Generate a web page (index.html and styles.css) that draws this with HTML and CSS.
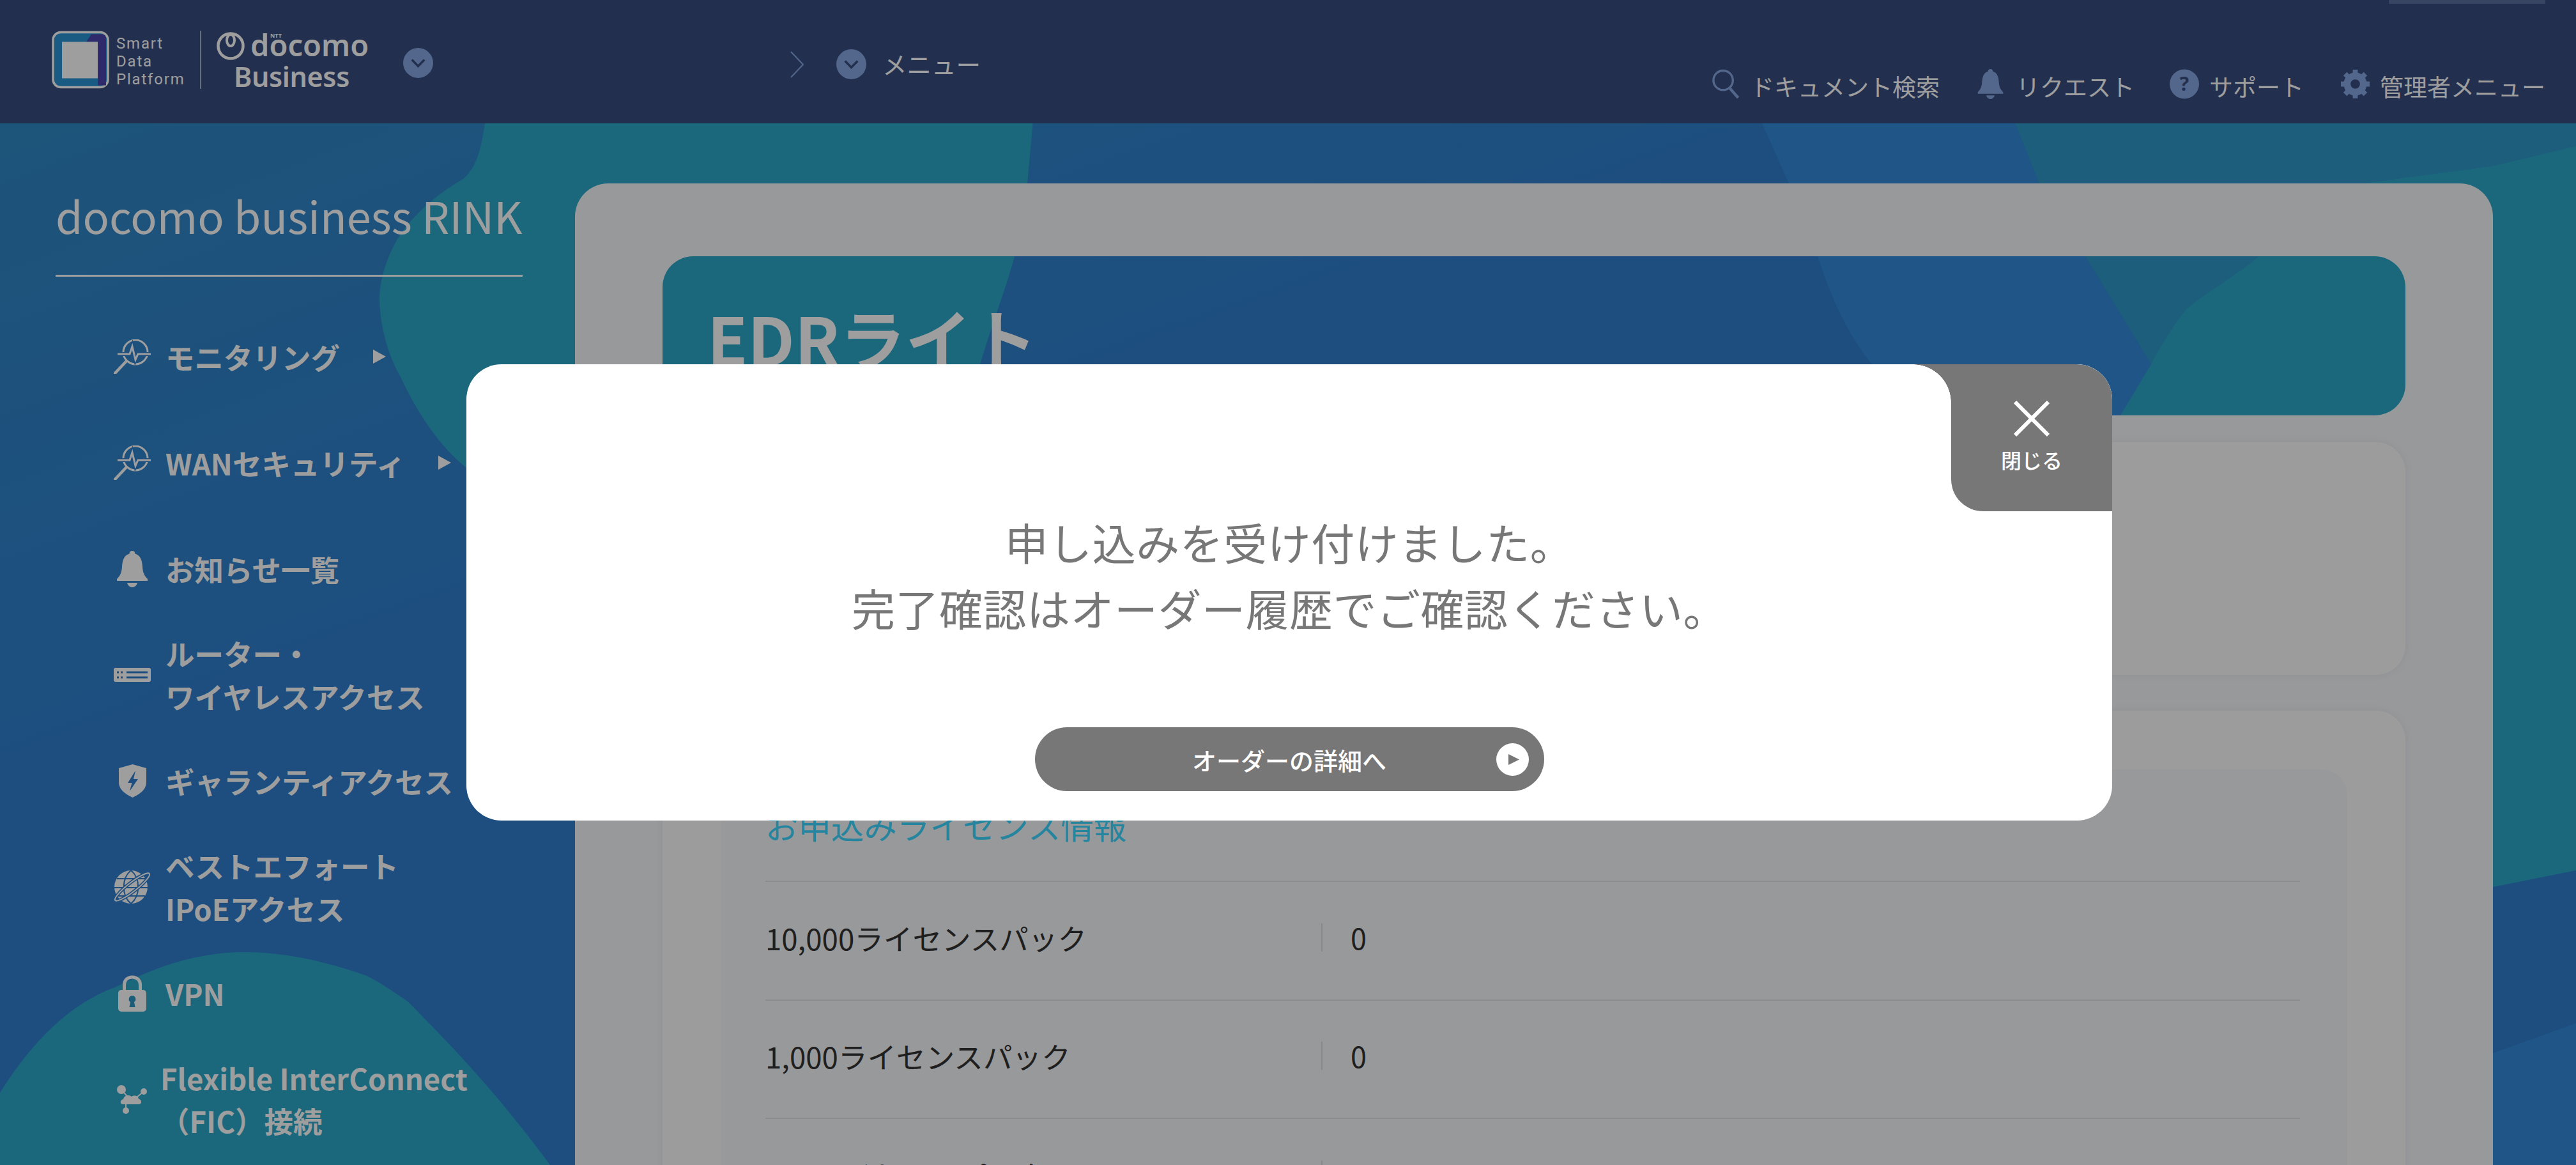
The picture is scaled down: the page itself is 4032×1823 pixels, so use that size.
FILE: index.html
```html
<!DOCTYPE html>
<html lang="ja">
<head>
<meta charset="utf-8">
<title>EDRライト</title>
<link rel="stylesheet" href="styles.css">
</head>
<body>
<header class="topbar">
  <div class="brand">
    <svg class="brand-mark" viewBox="0 0 90 90"><rect x="2" y="2" width="86" height="86" rx="12" class="bm-bg"/><path class="bm-purple" d="M62 5H78Q85 5 85 12V85H72V17H54Z"/><rect x="16" y="17" width="56" height="57" class="bm-in"/></svg>
    <div class="brand-name"><span>Smart</span><span>Data</span><span>Platform</span></div>
    <div class="brand-divider"></div>
    <div class="docomo">
      <div class="docomo-row">
        <svg class="docomo-ring" viewBox="0 0 48 44"><circle cx="24" cy="22" r="19.5" class="ring"/><ellipse cx="24" cy="13" rx="6" ry="9" class="ring-in"/></svg>
        <span class="docomo-word">docomo<small class="ntt">NTT</small></span>
      </div>
      <div class="docomo-biz">Business</div>
    </div>
  </div>
  <span class="round-toggle brand-toggle"><svg viewBox="0 0 24 24"><path d="M7 9.5l5 5 5-5"/></svg></span>
  <nav class="crumb">
    <svg class="crumb-arrow" viewBox="0 0 21 42"><path d="M1 1l19 20L1 41"/></svg>
    <span class="round-toggle"><svg viewBox="0 0 24 24"><path d="M7 9.5l5 5 5-5"/></svg></span>
    <span class="crumb-label">メニュー</span>
  </nav>
  <div class="utility">
    <div class="utility-tab"></div>
    <ul class="utility-nav">
      <li class="util-search"><svg viewBox="0 0 46 48"><circle cx="18" cy="18" r="15.5" class="u-stroke"/><path d="M28 30l14 16" class="u-stroke u-thick"/></svg>ドキュメント検索</li>
      <li class="util-bell"><svg viewBox="0 0 48 57"><use href="#bell"/></svg>リクエスト</li>
      <li class="util-help"><svg viewBox="0 0 46 47"><circle cx="23" cy="23.5" r="23"/><text x="23" y="34" class="q">?</text></svg>サポート</li>
      <li class="util-gear"><svg viewBox="0 0 48 48"><g class="gear"><circle cx="24" cy="24" r="13" class="gear-ring"/><path d="M20 1h8v8h-8zM20 39h8v8h-8zM1 20h8v8H1zM39 20h8v8h-8z"/><path d="M20 1h8v8h-8zM20 39h8v8h-8zM1 20h8v8H1zM39 20h8v8h-8z" transform="rotate(45 24 24)"/></g></svg>管理者メニュー</li>
    </ul>
  </div>
</header>

<svg class="defs"><defs>
  <g id="bell"><path d="M24 0c-3 0-4.500 2-4.500 4.500C11 7 8.500 15 8 25c-.5 9-3 14-8 19v3h48v-3c-5-5-7.500-10-8-19-.5-10-3-18-11.500-20.500C28.500 2 27 0 24 0z"/><path d="M16 50h16c-1 4-4 7-8 7s-7-3-8-7z"/></g>
  <g id="scope"><circle cx="34" cy="20" r="19" class="i-line"/><path d="M19 35L2 53" class="i-line i-thick"/><path d="M6 23H25L29 11L34 32L38 23H58" class="i-halo"/><path d="M6 23H25L29 11L34 32L38 23H58" class="i-line"/></g>
</defs></svg>

<div class="layout">
  <aside class="sidebar">
    <h2 class="side-title">docomo business RINK</h2>
    <ul class="side-menu">
      <li class="side-item"><span class="side-icon"><svg class="ic-scope" viewBox="0 0 58 54"><use href="#scope"/></svg></span><span class="side-text">モニタリング</span><i class="caret"></i></li>
      <li class="side-item"><span class="side-icon"><svg class="ic-scope" viewBox="0 0 58 54"><use href="#scope"/></svg></span><span class="side-text">WANセキュリティ</span><i class="caret"></i></li>
      <li class="side-item"><span class="side-icon"><svg class="ic-bell" viewBox="0 0 48 57"><use href="#bell"/></svg></span><span class="side-text">お知らせ一覧</span></li>
      <li class="side-item"><span class="side-icon"><svg class="ic-router" viewBox="0 0 58 22"><rect width="58" height="22" rx="3"/><path d="M5 7h3M11 7h3M5 15h3M11 15h3M20 7h33M20 15h33" class="cut"/></svg></span><span class="side-text">ルーター・<br>ワイヤレスアクセス</span></li>
      <li class="side-item"><span class="side-icon"><svg class="ic-shield" viewBox="0 0 43 52"><path d="M21.500 0L43 6V28C43 40 32 47 21.500 52 11 47 0 40 0 28V6z"/><path class="bolt" d="M26 10L14 29H20.500L17 42 30 23H23z"/></svg></span><span class="side-text">ギャランティアクセス</span></li>
      <li class="side-item"><span class="side-icon"><svg class="ic-globe" viewBox="0 0 58 54"><circle cx="27" cy="27" r="26"/><path class="cut-thin" d="M5 14H49M1 28H53M5 41H49M27 1C12 13 12 41 27 53M27 1C42 13 42 41 27 53"/><ellipse cx="29" cy="27" rx="34" ry="7" transform="rotate(-38 29 27)" class="orbit-cut"/><ellipse cx="29" cy="27" rx="34" ry="7" transform="rotate(-38 29 27)" class="orbit"/></svg></span><span class="side-text">ベストエフォート<br>IPoEアクセス</span></li>
      <li class="side-item"><span class="side-icon"><svg class="ic-lock" viewBox="0 0 44 57"><path class="shackle" d="M9.500 26V15C9.500 7.500 15 3 22 3s12.500 4.500 12.500 12V26"/><rect y="23" width="44" height="34" rx="5"/><path class="keyhole" d="M22 32a5.500 5.500 0 0 1 3 10l1.500 8h-9l1.500-8a5.500 5.500 0 0 1 3-10z"/></svg></span><span class="side-text">VPN</span></li>
      <li class="side-item side-item-wide"><span class="side-icon"><svg class="ic-fic" viewBox="0 0 50 46"><circle cx="8" cy="8" r="7"/><circle cx="43" cy="11" r="5"/><circle cx="15" cy="41" r="5"/><path class="fic-line" d="M8 8L20 22M43 11L32 20M15 41V28"/><path d="M10 31c-4 0-5-7 1-8 1-6 9-8 13-4 4-3 11-1 11 4 5 0 6 8 0 8z"/></svg></span><span class="side-text">Flexible InterConnect<br>（FIC）接続</span></li>
    </ul>
  </aside>

  <main class="panel">
    <section class="hero"><h1 class="hero-title">EDRライト</h1></section>
    <section class="card card-summary"></section>
    <section class="card card-detail">
      <div class="inner">
        <h3 class="inner-title">お申込みライセンス情報</h3>
        <dl class="rows">
          <div class="row"><dt>10,000ライセンスパック</dt><dd>0</dd></div>
          <div class="row"><dt>1,000ライセンスパック</dt><dd>0</dd></div>
          <div class="row"><dt>100ライセンスパック</dt><dd>1</dd></div>
        </dl>
      </div>
    </section>
  </main>
</div>

<div class="overlay">
  <div class="modal">
    <div class="close">
      <svg class="close-x" viewBox="0 0 56 56"><path d="M2 2L54 54M54 2L2 54"/></svg>
      <span>閉じる</span>
    </div>
    <p class="modal-text">申し込みを受け付けました。<br>完了確認はオーダー履歴でご確認ください。</p>
    <a class="modal-btn">オーダーの詳細へ<svg class="play" viewBox="0 0 51 51"><circle cx="25.500" cy="25.500" r="25.500"/><path d="M19 17V34L36 25.500z"/></svg></a>
  </div>
</div>
</body>
</html>
```

FILE: styles.css
```css
:root {
  --scene: url("data:image/svg+xml,%3Csvg xmlns='http://www.w3.org/2000/svg' width='4032' height='1823' viewBox='0 0 4032 1823'%3E%3Cdefs%3E%3ClinearGradient id='g' x1='0' y1='0' x2='0.6' y2='0.75'%3E%3Cstop offset='0' stop-color='%232f8ac4'/%3E%3Cstop offset='0.55' stop-color='%232f7fce'/%3E%3Cstop offset='1' stop-color='%232f7ece'/%3E%3C/linearGradient%3E%3C/defs%3E%3Crect width='4032' height='1823' fill='url(%23g)'/%3E%3Cpath fill='%232da9ca' d='M775,100 L759,193 C752,240 745,262 725,280 C690,300 660,325 635,355 C612,385 594,430 594,470 C596,520 610,560 627,590 C655,650 690,700 730,732 C900,860 1250,800 1400,750 C1480,700 1520,620 1534,570 C1555,500 1575,450 1588,401 L1608,287 L1625,100 Z'/%3E%3Cpath fill='%23328bda' d='M2740,100 L2758,193 L2799,285 L2845,401 Q2880,510 2930,570 L3100,800 L3319,650 L3367,570 L3264,401 L3191,285 L3154,193 L3140,100 Z'/%3E%3Cpath fill='%232f98c8' d='M3140,100 L3154,193 L3191,285 L3264,401 L3367,570 L3500,800 L4032,800 L4032,100 Z'/%3E%3Cpath fill='%232da9ca' d='M4032,229 L3902,260 L3700,287 C3640,292 3570,340 3536,401 C3490,440 3430,470 3415,493 C3395,520 3380,545 3367,570 L3319,650 L3250,780 L3300,1300 L3902,1388 L4032,1362 Z'/%3E%3Cpath fill='%23328bda' d='M3600,1700 L3902,1648 L4032,1601 L4032,1823 L3600,1823 Z'/%3E%3Cpath fill='%232da9ca' d='M0,1710 C50,1630 110,1570 180,1545 C260,1505 320,1490 383,1490 C450,1490 510,1505 574,1527 C600,1540 620,1555 638,1567 C700,1630 770,1700 861,1823 L0,1823 Z'/%3E%3C/svg%3E");
  --header: #374d7f;
  --accent: #86a6e2;
}
* { box-sizing: border-box; }
html, body { margin: 0; height: 100%; }
body {
  width: 4032px;
  height: 1823px;
  overflow: hidden;
  position: relative;
  font-family: "Noto Sans CJK JP", "Noto Sans", sans-serif;
  color: #fff;
  background: #2f7ece var(--scene) 0 0 / 4032px 1823px no-repeat fixed;
}
ul, dl, dd, h1, h2, h3, p { margin: 0; padding: 0; list-style: none; }
.defs { width: 0; height: 0; display: block; }

/* header */
.topbar { display: flex; align-items: flex-start; height: 193px; padding: 0 48px 0 81px; background: var(--header); }
.brand { display: flex; align-items: flex-start; margin-top: 48px; }
.brand-mark { width: 90px; height: 91px; flex: none; }
.bm-bg { fill: #2a94d6; stroke: #fff; stroke-width: 3.500; }
.bm-purple { fill: #4c44ad; }
.bm-in { fill: #fff; }
.brand-name { display: flex; flex-direction: column; margin: 6px 0 0 11px; font: 400 24px/28px Roboto, sans-serif; letter-spacing: 1.8px; width: 118px; }
.brand-divider { width: 2px; height: 91px; margin-left: 13px; background: rgba(255,255,255,.55); }
.docomo { display: flex; flex-direction: column; margin-left: 22px; width: 240px; }
.docomo-row { display: flex; align-items: flex-start; height: 50px; }
.docomo-ring { width: 48px; height: 44px; margin-top: 2px; flex: none; }
.ring { fill: none; stroke: #fff; stroke-width: 4.500; }
.ring-in { fill: none; stroke: #fff; stroke-width: 4; }
.docomo-word { position: relative; margin-left: 7px; font: 600 47px/47px "Noto Sans", sans-serif; letter-spacing: 0; margin-top: -1px; }
.ntt { position: absolute; left: 31px; top: 4px; font: 700 9px/9px "Noto Sans", sans-serif; }
.docomo-biz { margin: 0 0 0 29px; font: 600 43px/44px "Noto Sans", sans-serif; letter-spacing: -.4px; }
.round-toggle { display: block; width: 47px; height: 47px; border-radius: 50%; background: var(--accent); flex: none; }
.round-toggle svg { display: block; width: 47px; height: 47px; }
.round-toggle path { fill: none; stroke: var(--header); stroke-width: 1.800; }
.brand-toggle { margin: 75px 0 0 54px; }
.crumb { display: flex; align-items: center; margin: 77px 0 0 559px; }
.crumb-arrow { width: 21px; height: 42px; flex: none; }
.crumb-arrow path { fill: none; stroke: var(--accent); stroke-width: 2; }
.crumb .round-toggle { margin-left: 51px; }
.crumb-label { margin: -3px 0 0 25px; font-size: 38.500px; line-height: 48px; }
.utility { display: flex; flex-direction: column; align-items: flex-end; margin-left: auto; }
.utility-tab { width: 245px; height: 6px; background: #5a6f9f; }
.utility-nav { display: flex; align-items: center; margin-top: 105px; height: 47px; font-size: 37px; white-space: nowrap; }
.utility-nav li { display: flex; align-items: center; }
.utility-nav svg { height: 47px; flex: none; fill: var(--accent); margin-bottom: 6px; }
.util-search { gap: 15px; }
.util-search svg { width: 46px; }
.u-stroke { fill: none; stroke: var(--accent); stroke-width: 3.500; }
.u-thick { stroke-width: 4.500; }
.util-bell { gap: 17px; margin-left: 56px; }
.util-bell svg { width: 47px; }
.util-help { gap: 16px; margin-left: 55px; }
.util-help svg { width: 46px; }
.q { font: 700 30px "Noto Sans", sans-serif; text-anchor: middle; fill: var(--header); }
.util-gear { gap: 15px; margin-left: 57px; }
.util-gear svg { width: 47px; }
.gear-ring { fill: none; stroke: var(--accent); stroke-width: 11; }

/* layout */
.layout { display: flex; height: 1630px; }
.sidebar { width: 900px; flex: none; }
.side-title { width: 731px; height: 144px; margin: 96px 0 0 87px; border-bottom: 3px solid #fff; font: 400 68.500px/96px "Noto Sans CJK JP", "Noto Sans", sans-serif; white-space: nowrap; }
.side-menu { margin-top: 42px; }
.side-item { display: flex; align-items: center; height: 166px; padding-left: 178px; font-size: 45.500px; line-height: 67px; font-weight: 700; white-space: nowrap; }
.side-icon { display: flex; justify-content: center; width: 58px; flex: none; margin-right: 23px; }
.side-item-wide .side-icon { margin-right: 15px; }
.side-icon svg { display: block; fill: #fff; }
.ic-scope { width: 58px; height: 54px; }
.i-line { fill: none; stroke: #fff; stroke-width: 3; }
.i-thick { stroke-width: 4.500; stroke-linecap: round; }
.i-halo { fill: none; stroke: #2f7ece; stroke-width: 6; }
.ic-bell { width: 48px; height: 57px; }
.ic-router { width: 58px; height: 22px; }
.cut { stroke: #2f7ece; stroke-width: 3; fill: none; }
.ic-shield { width: 43px; height: 52px; }
.bolt { fill: #2f7ece; }
.ic-globe { width: 58px; height: 54px; overflow: visible; }
.cut-thin { fill: none; stroke: #2f7ece; stroke-width: 2; }
.orbit-cut { fill: none; stroke: #2f7ece; stroke-width: 5; }
.orbit { fill: none; stroke: #fff; stroke-width: 2; }
.ic-lock { width: 44px; height: 57px; }
.shackle { fill: none; stroke: #fff; stroke-width: 5; }
.keyhole { fill: #2e96c6; }
.ic-fic { width: 50px; height: 46px; }
.fic-line { fill: none; stroke: #fff; stroke-width: 2; }
.caret { display: block; width: 0; height: 0; margin-left: 52px; border-style: solid; border-width: 11.500px 0 11.500px 20px; border-color: transparent transparent transparent #fff; }

/* main */
.panel { width: 3002px; height: 1700px; margin-top: 94px; padding: 114px 137px 0; background: #f5f7fa; border-radius: 52px 52px 0 0; flex: none; }
.hero { height: 249px; padding: 62px 70px 0; border-radius: 48px; background: #2f7ece var(--scene) 0 0 / 4032px 1823px no-repeat fixed; }
.hero-title { font-size: 103px; line-height: 130px; font-weight: 700; }
.card { background: #fcfcfc; border-radius: 46px; box-shadow: 0 0 14px rgba(30,40,60,.06); }
.card-summary { height: 364px; margin-top: 42px; }
.card-detail { height: 900px; margin-top: 56px; padding: 92px 91px 0 92px; }
.inner { height: 800px; padding: 48px 74px 0 69px; border-radius: 40px; background: #f5f7fa; }
.inner-title { font-size: 51.500px; line-height: 78px; font-weight: 400; margin-bottom: 48px; color: #3dd6ff; }
.rows { color: #333; }
.row { display: flex; align-items: center; height: 185.500px; padding-bottom: 10px; border-top: 2px solid #e2e2e2; font-size: 45.600px; }
.row dt { width: 870px; flex: none; }
.row dd { height: 44px; padding-left: 44px; border-left: 2px solid #dcdcdc; font-size: 45px; line-height: 44px; }

/* modal */
.overlay { position: fixed; inset: 0; padding: 570px 0 0 730px; background: rgba(0,0,0,.38); }
.modal { position: relative; display: flex; flex-direction: column; align-items: center; width: 2576px; height: 714px; padding-top: 226px; border-radius: 55px; background: #fff; overflow: hidden; }
.modal-text { font-size: 68px; line-height: 103px; letter-spacing: .5px; color: #777; text-align: center; }
.modal-btn { position: relative; display: flex; align-items: center; justify-content: center; width: 797px; height: 100px; margin-top: 136px; border-radius: 50px; background: #777; color: #fff; font-size: 38px; font-weight: 500; }
.play { position: absolute; right: 24px; top: 24.500px; width: 51px; height: 51px; fill: #fff; }
.play path { fill: #777; }
.close { position: absolute; top: 0; right: 0; display: flex; flex-direction: column; align-items: center; width: 252px; height: 230px; padding: 57px 0 0; border-radius: 0 55px 0 50px; background: #777; color: #fff; font: 500 32px/46px "Noto Sans CJK JP", sans-serif; }
.close::before { content: ""; position: absolute; left: -60px; top: 0; width: 60px; height: 60px; background: radial-gradient(circle at 0 100%, #fff 59.500px, #777 60px); }
.close-x { display: block; width: 56px; height: 56px; margin-bottom: 13px; }
.close-x path { fill: none; stroke: #fff; stroke-width: 6; }
```
